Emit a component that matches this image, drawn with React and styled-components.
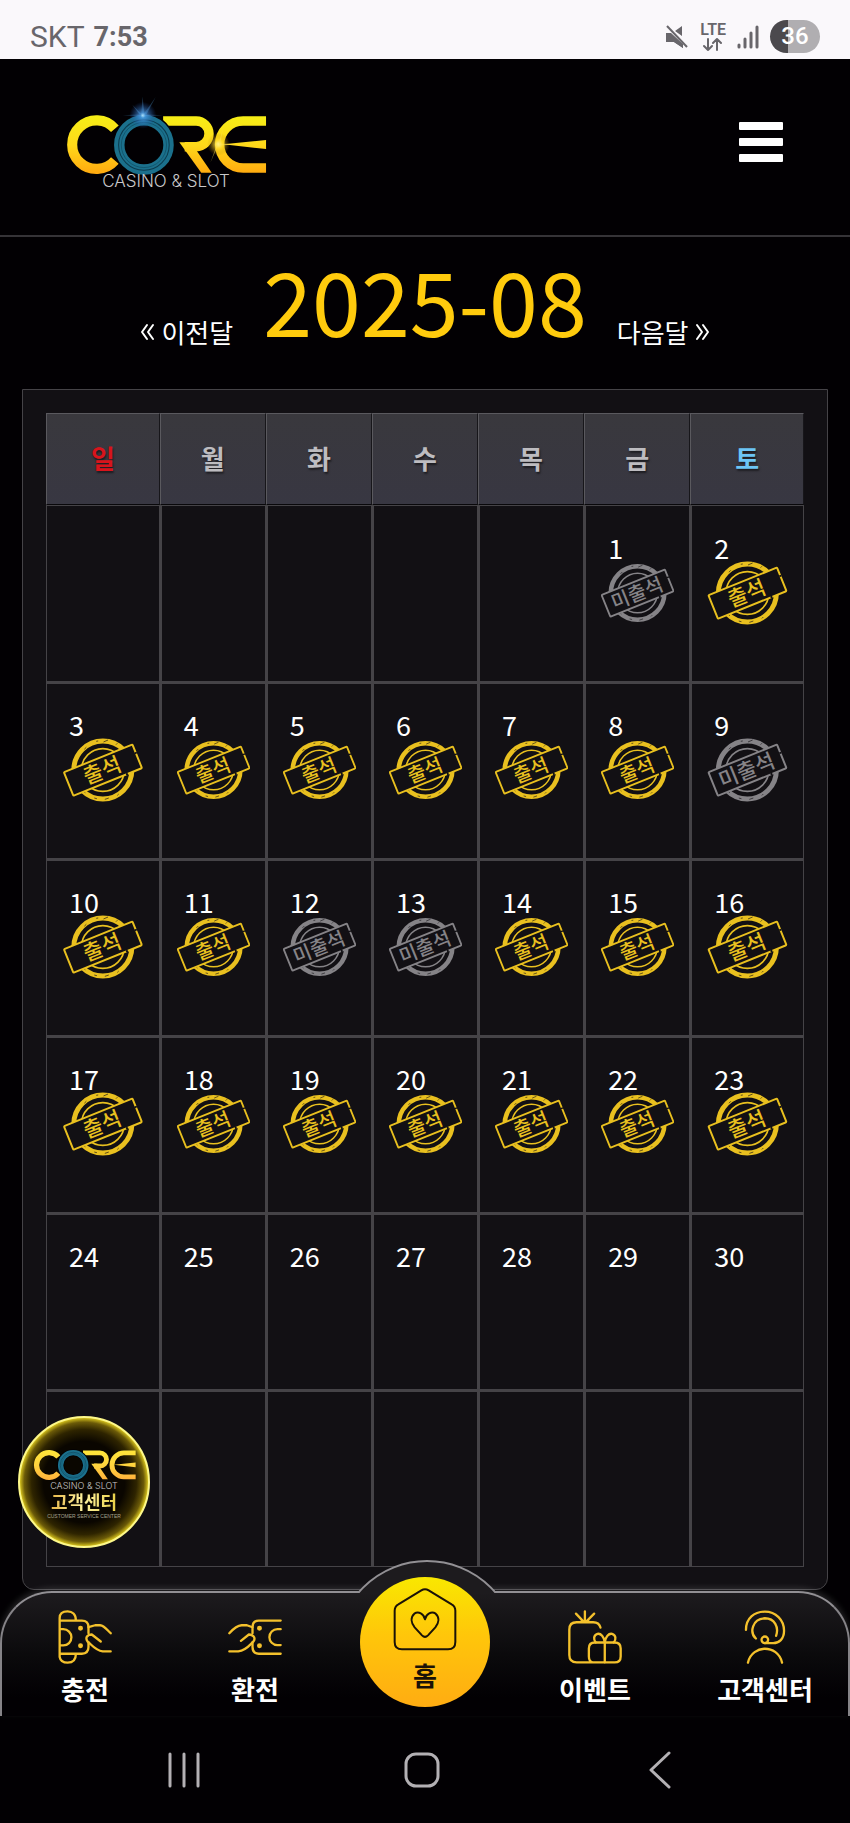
import React from 'react'
import styled, { createGlobalStyle } from 'styled-components'

const GlobalStyle = createGlobalStyle`
  * { box-sizing: border-box; }
  body {
    margin: 0;
    background: #020003;
    color: #fff;
    font-family: "Noto Sans CJK KR", "Noto Sans", sans-serif;
  }
  a { color: inherit; text-decoration: none; }
  button { padding: 0; border: 0; background: none; cursor: pointer; }
  svg { display: block; }
`

const Page = styled.div`
  display: flex;
  flex-direction: column;
  min-height: 100vh;
`

/* status bar */
const StatusBar = styled.div`
  display: flex;
  align-items: flex-end;
  justify-content: space-between;
  height: 59px;
  padding: 0 30px 6px;
  background: #faf8fb;
  color: #68666b;
  font-family: Roboto, sans-serif;
`
const Carrier = styled.div`
  display: flex;
  gap: 9px;
  font-size: 30px;
  line-height: 32px;
`
const Clock = styled.span`
  font-size: 27px;
  font-weight: 700;
`
const StatusIcons = styled.div`
  display: flex;
  align-items: center;
  gap: 11px;
`
const Lte = styled.span`
  display: flex;
  flex-direction: column;
  align-items: center;
  font-size: 16px;
  font-weight: 600;
  line-height: 16px;
`
const Battery = styled.span`
  width: 50px;
  border-radius: 17px;
  background: linear-gradient(90deg, #4b494d 36%, #b0aeb1 36%);
  color: #fff;
  font-size: 24px;
  font-weight: 500;
  line-height: 33px;
  text-align: center;
`

/* top bar with logo */
const Header = styled.header`
  display: flex;
  align-items: flex-start;
  justify-content: space-between;
  height: 178px;
  padding: 33px 67px 0 65px;
  border-bottom: 2px solid #353337;
`
const LogoLink = styled.a`
  display: flex;
  flex-direction: column;
  align-items: center;
`
const LogoText = styled.span`
  color: #c9c8ca;
  font-family: Inter, sans-serif;
  font-size: ${p => (p.$small ? '9px' : '17px')};
  font-weight: 300;
  line-height: ${p => (p.$small ? '10px' : '12px')};
`
const MenuButton = styled.button`
  display: flex;
  flex-direction: column;
  gap: 8px;
  margin-top: 30px;
`
const MenuBar = styled.span`
  width: 44px;
  height: 8px;
  border-radius: 1px;
  background: #fff;
`

/* month switcher */
const MonthNav = styled.nav`
  display: flex;
  align-items: flex-end;
  justify-content: center;
  gap: 30px;
  padding: 12px 0 40px;
`
const MonthTitle = styled.h1`
  margin: 0;
  color: #ffcb0d;
  font-size: 88px;
  font-weight: 400;
  line-height: 100px;
`
const MonthLink = styled.a`
  display: flex;
  align-items: center;
  gap: 6px;
  font-size: 26px;
  line-height: 34px;
`

/* calendar */
const Panel = styled.main`
  margin: 0 22px;
  padding: 23px 23px 22px;
  border: 1px solid #454347;
  border-radius: 0 0 12px 12px;
  background: #121014;
`
const Calendar = styled.table`
  width: 100%;
  table-layout: fixed;
  border-collapse: separate;
  border-spacing: 0;
`
const Col = styled.col`
  width: ${p => (p.$wide ? '15%' : '14%')};
`
const WeekDay = styled.th`
  height: 92px;
  padding: 0 0 4px;
  border: 1px solid #5a595e;
  border-right-color: #17161a;
  border-bottom-color: #09080b;
  background: linear-gradient(#39383d, #383742);
  color: ${p => p.$color || '#bdbcc0'};
  font-size: 26px;
  font-weight: 700;
  text-shadow: 1px 2px 2px rgba(0, 0, 0, 0.5);
`
const Day = styled.td`
  height: 177px;
  padding: 29px 15px 0;
  border: 1px solid #454347;
  vertical-align: top;
  & + & { border-left-width: 2px; }
  tr + tr > & { border-top-width: 2px; padding-top: 28px; }
`
const DayNumber = styled.div`
  padding-left: 7px;
  font-size: 27px;
  line-height: 26px;
`
const StampSvg = styled.svg`
  width: 100%;
  height: 64px;
`
const StampText = styled.text`
  font-family: "Noto Sans CJK KR", sans-serif;
  font-size: 64px;
  font-weight: 500;
`

/* bottom menu */
const TabBar = styled.nav`
  position: relative;
  height: 125px;
  margin-top: 1px;
  border: 2px solid #858387;
  border-top-color: #929094;
  border-bottom: 0;
  border-radius: 52px 52px 0 0;
  background: linear-gradient(#1d1b1e, #0b0a0c 50%, #020003 85%);
  box-shadow: 0 -3px 6px rgba(255, 255, 255, 0.14);
`
const Bump = styled.div`
  position: absolute;
  left: 50%;
  bottom: 100%;
  width: 140px;
  height: 33px;
  margin-left: -70px;
  overflow: hidden;
  &::before {
    content: '';
    display: block;
    width: 178px;
    height: 178px;
    margin-left: -19px;
    border: 2px solid #929094;
    border-radius: 50%;
    background: #1d1b1e;
  }
`
const TabList = styled.div`
  position: relative;
  display: grid;
  grid-template-columns: repeat(5, 1fr);
  margin: 0 -2px;
`
const Tab = styled.a`
  display: flex;
  flex-direction: column;
  align-items: center;
  gap: 8px;
  padding-top: 17px;
  font-size: 26px;
  font-weight: 700;
  line-height: 34px;
  white-space: nowrap;
`
const HomeTab = styled.a`
  display: flex;
  flex-direction: column;
  align-items: center;
  justify-self: center;
  gap: 7px;
  width: 130px;
  height: 130px;
  margin-top: -16px;
  padding-top: 10px;
  border-radius: 50%;
  background: linear-gradient(#f9e800, #ffc60a 45%, #ffac12);
  color: #1a1208;
  font-size: 26px;
  font-weight: 700;
  line-height: 34px;
`
const SupportBadge = styled.a`
  position: absolute;
  left: 16px;
  bottom: 168px;
  display: flex;
  flex-direction: column;
  align-items: center;
  width: 132px;
  height: 132px;
  padding-top: 31px;
  border: 2px solid #fdf88a;
  border-radius: 50%;
  background: radial-gradient(circle, #0a0600 45%, #2e2400 58%, #6b5a08 66%, #d9c51d 71%);
`
const BadgeTitle = styled.span`
  background: linear-gradient(90deg, #e8b84a, #fff3a0, #e8cf45);
  background-clip: text;
  color: transparent;
  font-size: 18px;
  font-weight: 700;
  line-height: 21px;
`
const BadgeNote = styled.span`
  color: #a5a18e;
  font-family: "Liberation Sans", sans-serif;
  font-size: 5px;
  line-height: 8px;
`

const SystemNav = styled.div`
  display: grid;
  grid-template-columns: repeat(3, 1fr);
  place-items: center;
  height: 107px;
  padding: 0 71px 0 65px;
`

const Lines = styled.svg`
  fill: none;
  stroke: ${p => p.$color || '#f4c12c'};
  stroke-width: ${p => p.$weight || 7};
  stroke-linecap: round;
  stroke-linejoin: round;
`

const LogoMark = ({ id, width, height, glow }) => (
  <svg width={width} height={height} viewBox={glow ? '50 35 597 246' : '50 100 597 182'} aria-hidden="true">
    <defs>
      <linearGradient id={id + 'gold'} gradientUnits="userSpaceOnUse" x1="0" y1="105" x2="0" y2="278">
        <stop offset="0" stopColor={glow ? '#f6ee16' : '#ffe63a'} />
        <stop offset="0.5" stopColor={glow ? '#ffd91a' : '#ffd43e'} />
        <stop offset="1" stopColor={glow ? '#ffa90f' : '#ffb13b'} />
      </linearGradient>
      <radialGradient id={id + 'blue'}>
        <stop offset="0" stopColor="#c8f4ff" />
        <stop offset="0.2" stopColor="#4a9be6" stopOpacity="0.8" />
        <stop offset="1" stopColor="#1b4fa8" stopOpacity="0" />
      </radialGradient>
      <radialGradient id={id + 'warm'}>
        <stop offset="0" stopColor="#fff9a8" />
        <stop offset="0.4" stopColor="#ffd92a" stopOpacity="0.6" />
        <stop offset="1" stopColor="#b07a00" stopOpacity="0" />
      </radialGradient>
    </defs>
    <g fill="none" stroke={`url(#${id}gold)`} strokeWidth="30">
      <path d="M197 144 A72 72 0 1 0 197 238" />
      <path d="M340 121 H438 A37 37 0 0 1 438 197 H404" strokeWidth="28" />
      <path d="M645 121 H577 A69 69 0 0 0 577 260 H645" strokeWidth="28" />
    </g>
    <path d="M388 184 H422 L484 274 H453 Z" fill={`url(#${id}gold)`} />
    <path d="M518 190 L645 177 V204 Z" fill={`url(#${id}gold)`} />
    <circle cx="283" cy="192" r="73" fill="none" stroke="#020003" strokeWidth="40" />
    <circle cx="283" cy="192" r="73" fill="none" stroke="#1b708c" strokeWidth="31" />
    <circle cx="283" cy="192" r="75" fill="none" stroke="#0b3a4d" strokeWidth="3" />
    <circle cx="283" cy="192" r="67" fill="none" stroke="#0e4a60" strokeWidth="2" />
    {glow && (
      <g>
        <circle cx="280" cy="104" r="40" fill={`url(#${id}blue)`} />
        <path d="M280 104 L318 50 L287 108 Z M280 104 L248 72 L276 110 Z M275 104 L279 48 L285 104 Z M220 104 L280 101 L340 104 L280 107 Z" fill="#5aa8f0" opacity="0.3" />
        <circle cx="504" cy="190" r="34" fill={`url(#${id}warm)`} />
        <path d="M504 190 L480 245 L498 194 Z M504 190 L518 140 L508 194 Z M500 188 L560 190 L500 194 Z" fill="#ffe45a" opacity="0.5" />
      </g>
    )}
  </svg>
)

const Stamp = ({ missed }) => {
  const color = missed ? '#858387' : '#e9c01f'
  return (
    <StampSvg viewBox="0 0 240 194" role="img" aria-label={missed ? '미출석' : '출석'}>
      <g fill="none" stroke={color}>
        <circle cx="120" cy="97" r="88" strokeWidth="15" />
        <circle cx="120" cy="97" r="65" strokeWidth="5" />
      </g>
      <path
        d="M64 34 L70 28 M100 10 L106 9 M122 12 L136 6 M160 20 L164 16 M62 162 L67 166 M94 182 L102 184 M126 186 L138 182 M164 174 L168 170"
        stroke="#121014"
        strokeWidth="2"
      />
      <g transform="rotate(-22 120 97)">
        <rect x="8" y="59" width="224" height="77" rx="3" fill="#121014" stroke={color} strokeWidth="6" />
        <path d="M180 136 h6 M232 84 v5" stroke="#121014" strokeWidth="7" />
        <StampText x="118" y="120" textAnchor="middle" fill={color}>{missed ? '미출석' : '출석'}</StampText>
      </g>
    </StampSvg>
  )
}

const ChargeIcon = () => (
  <Lines width="54" height="54" viewBox="173 690 163 163">
    <path d="M178 832 V714 C178 700 188 694 202 694 C216 694 227 703 227 722 M178 722 H245 Q265 722 265 742 V760 M265 788 V802 Q265 822 245 822 H178 M178 832 C180 843 190 849 202 849 C216 849 227 841 227 822" />
    <path d="M180 748 H189 A24 24 0 0 1 189 797 H180" />
    <path d="M265 742 L285 736 H300 C314 737 322 752 332 760 M332 815 H308 C285 812 275 795 262 785 C254 773 262 764 275 764 L302 785" />
    <circle cx="241" cy="745" r="4" fill="#f4c12c" />
    <circle cx="241" cy="798" r="4" fill="#f4c12c" />
  </Lines>
)

const WithdrawIcon = () => (
  <Lines width="54" height="54" viewBox="683 690 163 163">
    <path d="M842 722 H776 Q757 722 757 742 V760 M757 788 V802 Q757 822 776 822 H842" />
    <path d="M842 748 H832 A24 24 0 0 0 832 796 H842" />
    <path d="M757 742 L740 736 H724 C709 737 698 748 687 760 M687 815 H714 C738 812 748 796 760 785 C768 773 758 764 746 764 L722 783" />
    <circle cx="778" cy="745" r="4" fill="#f4c12c" />
    <circle cx="778" cy="798" r="4" fill="#f4c12c" />
  </Lines>
)

const EventIcon = () => (
  <Lines width="54" height="54" viewBox="84 90 163 163">
    <path d="M182 143 C179 132 170 127 160 127 H110 Q88 127 88 149 V226 Q88 248 110 248 H225 Q243 248 243 230 V206 Q243 188 225 188 H165 Q147 188 147 206 V230 Q147 244 158 248" />
    <path d="M135 94 V126 M108 101 L131 125 M163 101 L139 125 M122 126 H149 M195 188 V248" />
    <path d="M195 188 C193 170 183 160 173 162 C161 166 160 179 168 188 M195 188 C197 170 207 160 217 162 C229 166 230 179 222 188" />
  </Lines>
)

const SupportIcon = () => (
  <Lines width="54" height="54" viewBox="594 90 163 163">
    <path d="M618 150 C618 115 643 95 675 95 C708 95 733 120 733 153 C733 178 718 190 700 190 H675" />
    <path d="M648 176 C628 158 637 116 675 115 C705 115 718 142 709 168" />
    <circle cx="675" cy="180" r="10" />
    <path d="M624 249 C630 220 655 207 675 207 C697 207 721 220 727 249" />
  </Lines>
)

const HomeIcon = () => (
  <Lines width="64" height="64" viewBox="279 141 192 192" $color="#1a1208" $weight={6}>
    <path d="M364 151 Q375 144 386 151 L455 193 Q466 199 466 212 V306 Q466 328 444 328 H306 Q284 328 284 306 V212 Q284 199 295 193 Z" />
    <path d="M375 238 C372 221 355 213 343 221 C331 232 333 248 344 262 L366 286 Q375 295 384 286 L406 262 C417 248 419 232 407 221 C395 213 378 221 375 238 Z" />
  </Lines>
)

const Chevrons = ({ right }) => (
  <Lines width="15" height="18" viewBox="0 0 15 18" $color="#fff" $weight={2}>
    <path d={right ? 'M2 2 L7 9 L2 16 M8 2 L13 9 L8 16' : 'M7 2 L2 9 L7 16 M13 2 L8 9 L13 16'} />
  </Lines>
)

const weekDays = ['일', '월', '화', '수', '목', '금', '토']
const dayColors = { 일: '#d8141c', 토: '#6cc5f5' }
const missedDays = [1, 9, 12, 13]
const lastStamped = 23
const firstOffset = 5

const weeks = [0, 1, 2, 3, 4, 5].map(w =>
  weekDays.map((_, d) => {
    const day = w * 7 + d - firstOffset + 1
    return day > 0 && day <= 30 ? day : null
  })
)

const App = () => (
  <Page>
    <GlobalStyle />
    <StatusBar>
      <Carrier>SKT <Clock>7:53</Clock></Carrier>
      <StatusIcons>
        <svg width="24" height="24" viewBox="0 0 24 24" fill="#68666b">
          <path d="M10 6 L17 1 V11 Z M1 8 H7 L18 17 V23 L9 17 H1 Z" />
          <path d="M2 2 L22 22" stroke="#faf8fb" strokeWidth="5" />
          <path d="M1 8 H6 L18 19 V23 L9 17 H1 Z" />
          <path d="M2 1 L22 22" stroke="#68666b" strokeWidth="2" />
        </svg>
        <Lte>
          LTE
          <Lines width="20" height="13" viewBox="0 0 20 13" $color="#68666b" $weight={2}>
            <path d="M5 1 V12 M1 8 L5 12 L9 8 M14 12 V1 M10 5 L14 1 L18 5" />
          </Lines>
        </Lte>
        <Lines width="22" height="24" viewBox="0 0 22 24" $color="#68666b" $weight={3}>
          <path d="M2 20 V22 M8 14 V22 M14 8 V22 M20 2 V22" />
        </Lines>
        <Battery>36</Battery>
      </StatusIcons>
    </StatusBar>

    <Header>
      <LogoLink href="#" aria-label="CORE">
        <LogoMark id="top" width="202" height="83" glow />
        <LogoText>CASINO &amp; SLOT</LogoText>
      </LogoLink>
      <MenuButton aria-label="메뉴">
        <MenuBar /><MenuBar /><MenuBar />
      </MenuButton>
    </Header>

    <MonthNav>
      <MonthLink href="#"><Chevrons />이전달</MonthLink>
      <MonthTitle>2025-08</MonthTitle>
      <MonthLink href="#">다음달<Chevrons right /></MonthLink>
    </MonthNav>

    <Panel>
      <Calendar>
        <colgroup>
          {weekDays.map((d, i) => <Col key={d} $wide={i === 0 || i === 6} />)}
        </colgroup>
        <thead>
          <tr>
            {weekDays.map(d => <WeekDay key={d} $color={dayColors[d]}>{d}</WeekDay>)}
          </tr>
        </thead>
        <tbody>
          {weeks.map((week, w) => (
            <tr key={w}>
              {week.map((day, d) => (
                <Day key={d}>
                  {day && <DayNumber>{day}</DayNumber>}
                  {day && day <= lastStamped && <Stamp missed={missedDays.includes(day)} />}
                </Day>
              ))}
            </tr>
          ))}
        </tbody>
      </Calendar>
    </Panel>

    <TabBar>
      <Bump />
      <SupportBadge href="#">
        <LogoMark id="badge" width="103" height="32" />
        <LogoText $small>CASINO &amp; SLOT</LogoText>
        <BadgeTitle>고객센터</BadgeTitle>
        <BadgeNote>CUSTOMER SERVICE CENTER</BadgeNote>
      </SupportBadge>
      <TabList>
        <Tab href="#"><ChargeIcon />충전</Tab>
        <Tab href="#"><WithdrawIcon />환전</Tab>
        <HomeTab href="#"><HomeIcon />홈</HomeTab>
        <Tab href="#"><EventIcon />이벤트</Tab>
        <Tab href="#"><SupportIcon />고객센터</Tab>
      </TabList>
    </TabBar>

    <SystemNav>
      <button aria-label="최근 앱">
        <Lines width="36" height="38" viewBox="0 0 36 38" $color="#b3b0b4" $weight={3}>
          <path d="M4 3 V35 M18 3 V35 M32 3 V35" />
        </Lines>
      </button>
      <button aria-label="홈 화면">
        <Lines width="38" height="38" viewBox="0 0 38 38" $color="#b3b0b4" $weight={3}>
          <rect x="3" y="3" width="32" height="32" rx="10" />
        </Lines>
      </button>
      <button aria-label="뒤로">
        <Lines width="24" height="38" viewBox="0 0 24 38" $color="#b3b0b4" $weight={3}>
          <path d="M21 2 L3 19 L21 36" />
        </Lines>
      </button>
    </SystemNav>
  </Page>
)

export default App
